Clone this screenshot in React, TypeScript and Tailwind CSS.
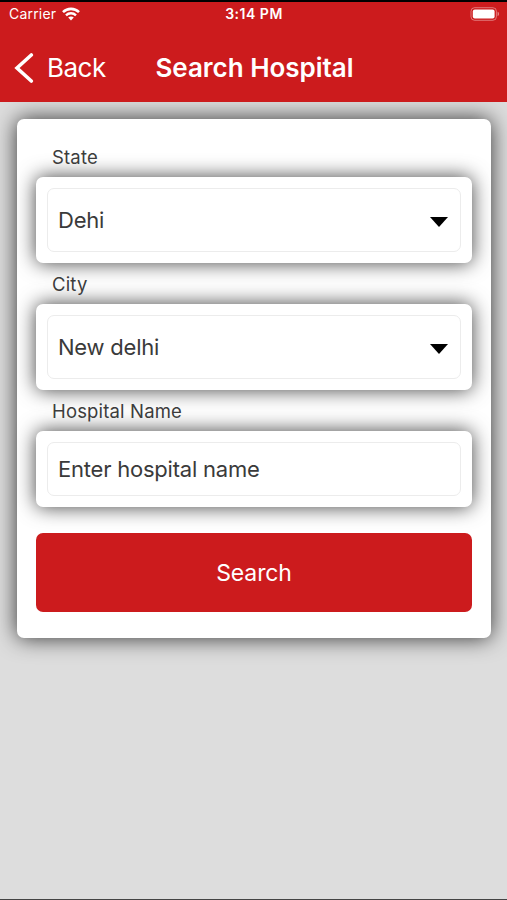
import { useState } from "react";

const StatusBar = () => (
  <div className="relative flex h-[23px] items-center justify-between pl-[9px] pr-[7px] text-white">
    <div className="flex items-center gap-[6px]">
      <span className="text-[14px] leading-none tracking-[0.2px]">Carrier</span>
      <svg width="18" height="14" viewBox="0 0 18 14" fill="none">
        <path d="M1 5.1C5.4.8 12.6.8 17 5.1" stroke="white" strokeWidth="2.6" />
        <path d="M4 8.3c2.8-2.7 7.2-2.7 10 0" stroke="white" strokeWidth="2.4" />
        <path d="M9 13.4 6.2 10.6c1.5-1.5 4.1-1.5 5.6 0z" fill="white" />
      </svg>
    </div>
    <span className="absolute inset-x-0 pl-px text-center text-[14px] font-semibold leading-none tracking-[0.5px]">
      3:14 PM
    </span>
    <svg width="30" height="14" viewBox="0 0 30 14" fill="none">
      <rect x="1" y="0.7" width="25.4" height="12.6" rx="3.6" stroke="white" strokeOpacity="0.4" />
      <rect x="2.8" y="2.4" width="21.8" height="9.2" rx="2" fill="white" />
      <path d="M27.6 4.8c1.8.6 1.8 3.8 0 4.4z" fill="white" fillOpacity="0.5" />
    </svg>
  </div>
);

const Header = () => (
  <header className="h-[102px] border-t-2 border-black bg-[#cc1b1d]">
    <StatusBar />
    <div className="relative mt-1 flex h-[78px] items-center text-white">
      <button className="flex items-center pl-[14px]">
        <svg width="20" height="30" viewBox="0 0 20 30" fill="none">
          <path d="M17.3 2 3 15l14.3 13" stroke="white" strokeWidth="3.6" strokeLinecap="round" />
        </svg>
        <span className="ml-[13px] text-[26px] leading-none tracking-[-0.5px]">Back</span>
      </button>
      <h1 className="absolute inset-x-0 pl-[2px] text-center text-[26px] font-semibold leading-none tracking-[-0.02px] pointer-events-none">
        Search Hospital
      </h1>
    </div>
  </header>
);

const Label = ({ children }: { children: string }) => (
  <label className="relative z-10 block pl-4 text-[18.5px] leading-[22px] tracking-[0.16px] text-[#3c3c3c]">
    {children}
  </label>
);

const fieldShadow = "shadow-[0_0_20px_rgba(0,0,0,0.75)]";

const Select = ({ value }: { value: string }) => (
  <div className={`h-[86px] rounded-[7px] bg-white p-[11px] ${fieldShadow}`}>
    <button className="flex h-full w-full items-center justify-between rounded-[7px] border border-[#ececec] pl-[10px] pr-[12px]">
      <span className="text-[22px] leading-none tracking-[-0.22px] text-[#3a3a3a]">{value}</span>
      <svg width="18" height="10" viewBox="0 0 18 10" className="mt-[3px]">
        <path d="M0 0h18L9 10z" fill="black" />
      </svg>
    </button>
  </div>
);

const App = () => {
  const [hospital, setHospital] = useState("");

  return (
    <div className="flex h-[900px] w-full flex-col overflow-hidden border-b border-[#444] bg-[#dddddd] font-['Inter',sans-serif]">
      <Header />
      <main className="flex-1 overflow-hidden px-4 pt-[17px]">
        <div className="ml-[1px] h-[519px] w-[474px] rounded-[7px] bg-white px-[19px] pt-[27px] shadow-[0_0_22px_rgba(0,0,0,0.78)]">
          <Label>State</Label>
          <div className="mt-[9px]">
            <Select value="Dehi" />
          </div>
          <div className="mt-[10px]">
            <Label>City</Label>
          </div>
          <div className="mt-[9px]">
            <Select value="New delhi" />
          </div>
          <div className="mt-[10px]">
            <Label>Hospital Name</Label>
          </div>
          <div className={`mt-[9px] h-[76px] rounded-[7px] bg-white p-[11px] ${fieldShadow}`}>
            <input
              value={hospital}
              onChange={(e) => setHospital(e.target.value)}
              placeholder="Enter hospital name"
              className="h-full w-full rounded-[7px] border border-[#ececec] px-[10px] text-[22px] tracking-[-0.22px] text-[#3a3a3a] outline-none placeholder:text-[#3a3a3a]"
            />
          </div>
          <button className="mt-[26px] h-[79px] w-full rounded-[7px] bg-[#cc1b1d] pt-px text-[23px] tracking-[-0.1px] text-white">
            Search
          </button>
        </div>
      </main>
    </div>
  );
};

export default App;
